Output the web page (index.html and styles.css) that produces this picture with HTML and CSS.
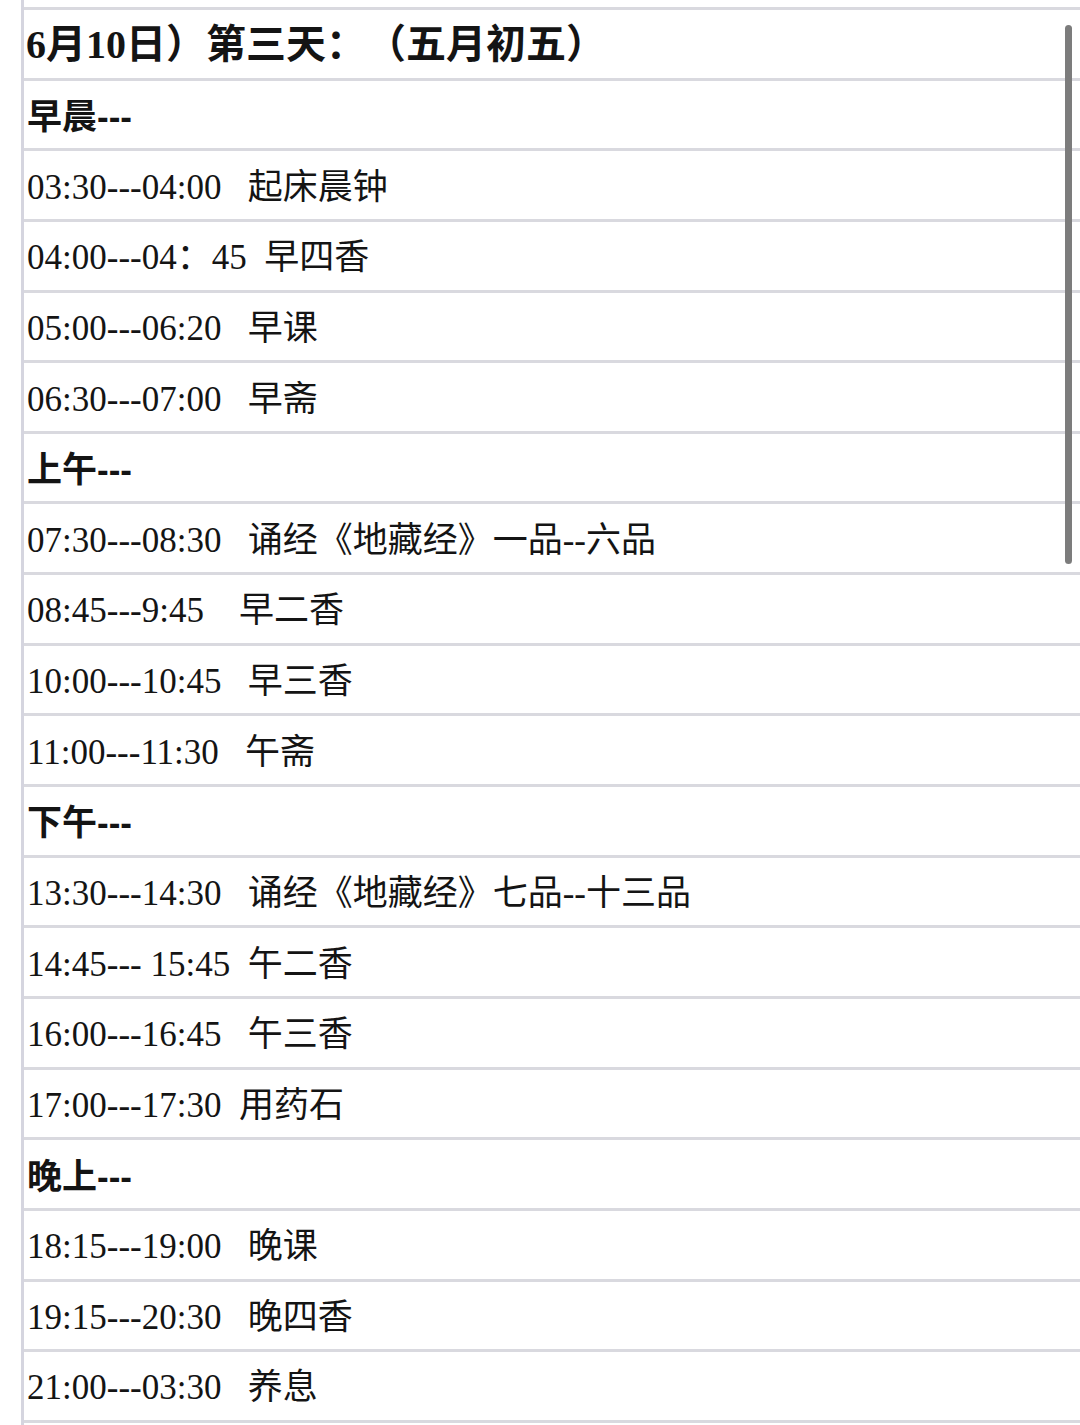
FILE: index.html
```html
<!DOCTYPE html>
<html lang="zh-CN">
<head>
<meta charset="utf-8">
<title>日程</title>
<link rel="stylesheet" href="styles.css">
</head>
<body>
<div class="sheet">
  <div class="stub"></div>
  <div class="row title">6月10日）第三天：（五月初五）</div>
  <div class="row section">早晨---</div>
  <div class="row">03:30---04:00&nbsp;&nbsp;&nbsp;起床晨钟</div>
  <div class="row">04:00---04：45&nbsp;&nbsp;早四香</div>
  <div class="row">05:00---06:20&nbsp;&nbsp;&nbsp;早课</div>
  <div class="row">06:30---07:00&nbsp;&nbsp;&nbsp;早斋</div>
  <div class="row section">上午---</div>
  <div class="row">07:30---08:30&nbsp;&nbsp;&nbsp;诵经《地藏经》一品--六品</div>
  <div class="row">08:45---9:45&nbsp;&nbsp;&nbsp;&nbsp;早二香</div>
  <div class="row">10:00---10:45&nbsp;&nbsp;&nbsp;早三香</div>
  <div class="row">11:00---11:30&nbsp;&nbsp;&nbsp;午斋</div>
  <div class="row section">下午---</div>
  <div class="row">13:30---14:30&nbsp;&nbsp;&nbsp;诵经《地藏经》七品--十三品</div>
  <div class="row">14:45--- 15:45&nbsp;&nbsp;午二香</div>
  <div class="row">16:00---16:45&nbsp;&nbsp;&nbsp;午三香</div>
  <div class="row">17:00---17:30&nbsp;&nbsp;用药石</div>
  <div class="row section">晚上---</div>
  <div class="row">18:15---19:00&nbsp;&nbsp;&nbsp;晚课</div>
  <div class="row">19:15---20:30&nbsp;&nbsp;&nbsp;晚四香</div>
  <div class="row">21:00---03:30&nbsp;&nbsp;&nbsp;养息</div>
  <div class="row"></div>
</div>
<div class="scrollbar"></div>
</body>
</html>
```

FILE: styles.css
```css
html, body {
  margin: 0;
  padding: 0;
  background: #ffffff;
  overflow: hidden;
  height: 1425px;
}

.sheet {
  margin-left: 21px;
  width: 1100px;
  border-left: 3px solid #d5d5df;
  display: flex;
  flex-direction: column;
  font-family: "Liberation Serif", "Noto Sans CJK SC", serif;
  font-size: 35px;
  color: #141414;
  text-spacing-trim: space-all;
}

.stub {
  height: 7px;
  flex: none;
}

.row {
  box-sizing: border-box;
  height: 70.65px;
  flex: none;
  border-top: 3px solid #d9d9df;
  padding-left: 3px;
  padding-top: 4px;
  display: flex;
  align-items: center;
  white-space: pre;
  line-height: 1;
}

.title {
  font-weight: bold;
  font-size: 40px;
  padding-left: 2px;
  padding-top: 3px;
}

.section {
  font-family: "Liberation Sans", "Noto Sans CJK SC", sans-serif;
  font-weight: bold;
}

.scrollbar {
  position: absolute;
  left: 1065px;
  top: 25px;
  width: 7px;
  height: 539px;
  border-radius: 4px;
  background: #7c7c7c;
}
```
